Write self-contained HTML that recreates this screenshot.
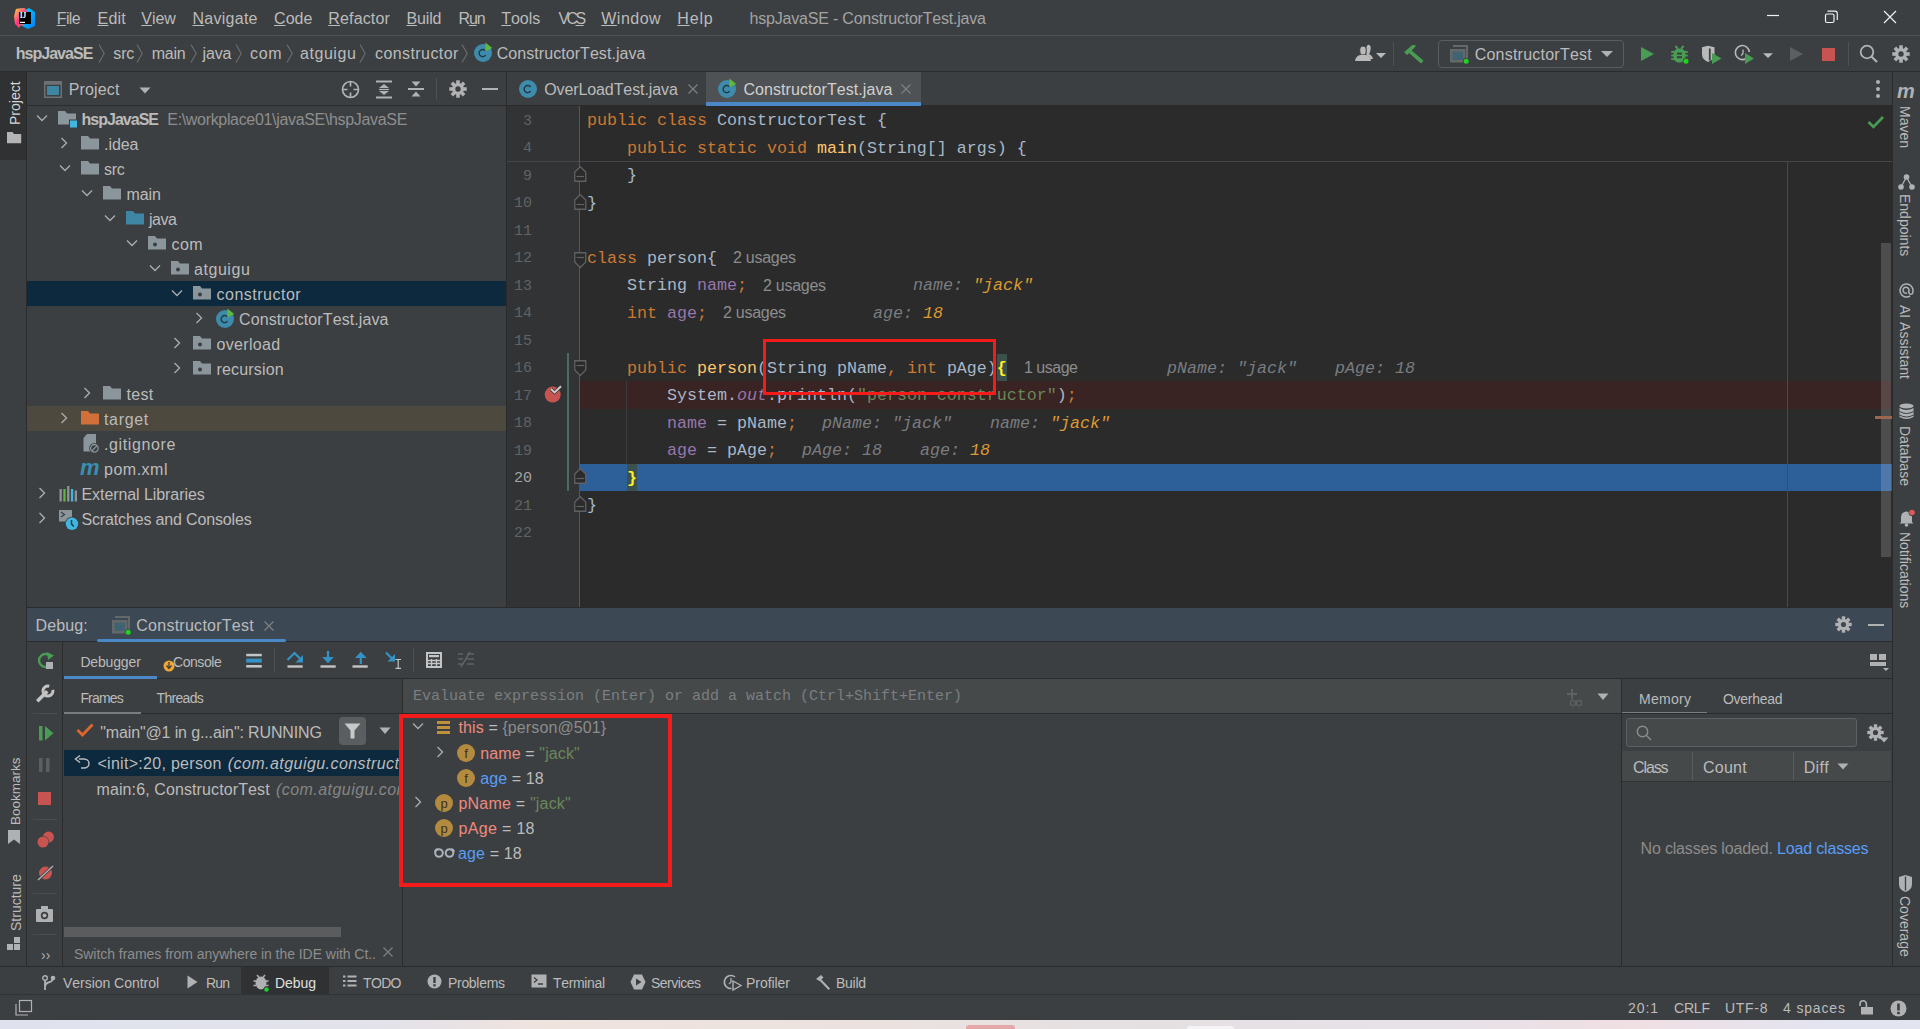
<!DOCTYPE html><html><head><meta charset="utf-8"><title>IDE</title><style>
html,body{margin:0;padding:0;}
body{width:1920px;height:1029px;overflow:hidden;position:relative;background:#3c3f41;}
.a{position:absolute;}
.t{white-space:pre;font-kerning:none;}
.s{font-family:"Liberation Sans",sans-serif;}
.m{font-family:"Liberation Mono",monospace;}
svg.a{overflow:visible;}
</style></head><body><div class="a" style="left:0px;top:0px;width:1920px;height:1029px;background:#3c3f41;"></div>
<div class="a" style="left:0px;top:1020px;width:1920px;height:9px;background:linear-gradient(90deg,#dfe2ee 0%,#e3e2ea 20%,#efe3de 28%,#ebe2df 45%,#e4e0e2 60%,#e6e2e8 75%,#f0dfe3 85%,#e3e4f0 95%,#e2e4f0 100%);"></div>
<div class="a" style="left:966px;top:1025px;width:49px;height:4px;background:#e6a9a9;border-radius:3px 3px 0 0;"></div>
<div class="a" style="left:1187px;top:1026px;width:47px;height:3px;background:#f4f4f6;border-radius:3px 3px 0 0;"></div>
<div class="a" style="left:0px;top:35px;width:1920px;height:1px;background:#505356;"></div>
<svg class="a" style="left:14px;top:7px;" width="22" height="22" viewBox="0 0 22 22">
<defs><linearGradient id="lg1" x1="0" y1="0" x2="1" y2="1"><stop offset="0" stop-color="#ffd23c"/><stop offset=".5" stop-color="#ff318c"/><stop offset="1" stop-color="#fc801d"/></linearGradient>
<linearGradient id="lg2" x1="0" y1="0" x2="1" y2="1"><stop offset="0" stop-color="#00e0ff"/><stop offset="1" stop-color="#087cfa"/></linearGradient></defs>
<polygon points="2,2 10,1 13,6 5,21 1,17 0,9" fill="url(#lg1)"/>
<polygon points="9,1 14,6 11,3 15,1 21,5 21,19 14,22 6,18" fill="url(#lg2)"/>
<polygon points="2,2 11,1 15,7 9,19 1,16 1,10" fill="url(#lg1)" opacity=".9"/>
<rect x="5" y="5" width="12" height="12" fill="#000"/>
<text x="5.8" y="11" font-family="Liberation Serif" font-weight="bold" font-size="7.5" fill="#fff" letter-spacing="-0.3">IJ</text>
<rect x="6" y="14.8" width="5" height="1.2" fill="#fff"/>
</svg>
<div class="a t s " style="left:56.7px;top:7.95px;font-size:16px;line-height:21px;color:#bbbbbb;letter-spacing:-0.594px;"><span style="text-decoration:underline;text-underline-offset:1px;text-decoration-thickness:1px">F</span>ile</div>
<div class="a t s " style="left:97.5px;top:7.95px;font-size:16px;line-height:21px;color:#bbbbbb;letter-spacing:0.243px;"><span style="text-decoration:underline;text-underline-offset:1px;text-decoration-thickness:1px">E</span>dit</div>
<div class="a t s " style="left:141.3px;top:7.95px;font-size:16px;line-height:21px;color:#bbbbbb;letter-spacing:-0.060px;"><span style="text-decoration:underline;text-underline-offset:1px;text-decoration-thickness:1px">V</span>iew</div>
<div class="a t s " style="left:192.5px;top:7.95px;font-size:16px;line-height:21px;color:#bbbbbb;letter-spacing:0.265px;"><span style="text-decoration:underline;text-underline-offset:1px;text-decoration-thickness:1px">N</span>avigate</div>
<div class="a t s " style="left:274px;top:7.95px;font-size:16px;line-height:21px;color:#bbbbbb;letter-spacing:0.083px;"><span style="text-decoration:underline;text-underline-offset:1px;text-decoration-thickness:1px">C</span>ode</div>
<div class="a t s " style="left:328.3px;top:7.95px;font-size:16px;line-height:21px;color:#bbbbbb;letter-spacing:0.147px;"><span style="text-decoration:underline;text-underline-offset:1px;text-decoration-thickness:1px">R</span>efactor</div>
<div class="a t s " style="left:406.5px;top:7.95px;font-size:16px;line-height:21px;color:#bbbbbb;letter-spacing:-0.145px;"><span style="text-decoration:underline;text-underline-offset:1px;text-decoration-thickness:1px">B</span>uild</div>
<div class="a t s " style="left:458.5px;top:7.95px;font-size:16px;line-height:21px;color:#bbbbbb;letter-spacing:-1.176px;">R<span style="text-decoration:underline;text-underline-offset:1px;text-decoration-thickness:1px">u</span>n</div>
<div class="a t s " style="left:501.25px;top:7.95px;font-size:16px;line-height:21px;color:#bbbbbb;letter-spacing:-0.031px;"><span style="text-decoration:underline;text-underline-offset:1px;text-decoration-thickness:1px">T</span>ools</div>
<div class="a t s " style="left:558.5px;top:7.95px;font-size:16px;line-height:21px;color:#bbbbbb;letter-spacing:-2.599px;">VC<span style="text-decoration:underline;text-underline-offset:1px;text-decoration-thickness:1px">S</span></div>
<div class="a t s " style="left:601.25px;top:7.95px;font-size:16px;line-height:21px;color:#bbbbbb;letter-spacing:0.499px;"><span style="text-decoration:underline;text-underline-offset:1px;text-decoration-thickness:1px">W</span>indow</div>
<div class="a t s " style="left:677.3px;top:7.95px;font-size:16px;line-height:21px;color:#bbbbbb;letter-spacing:0.831px;"><span style="text-decoration:underline;text-underline-offset:1px;text-decoration-thickness:1px">H</span>elp</div>
<div class="a t s " style="left:749.6px;top:7.95px;font-size:16px;line-height:21px;color:#a3a3a3;letter-spacing:-0.205px;">hspJavaSE - ConstructorTest.java</div>
<svg class="a" style="left:1760px;top:4px;" width="160" height="26" viewBox="0 0 160 26">
<line x1="7" y1="11.5" x2="19" y2="11.5" stroke="#f0f0f0" stroke-width="1.2"/>
<rect x="65.5" y="10" width="8.5" height="8.5" rx="1.5" fill="none" stroke="#f0f0f0" stroke-width="1.2"/>
<path d="M67.5 7.2 H75 Q77.3 7.2 77.3 9.5 V16" fill="none" stroke="#f0f0f0" stroke-width="1.2"/>
<path d="M124 7 L136 19 M136 7 L124 19" stroke="#f0f0f0" stroke-width="1.2"/>
</svg>
<div class="a" style="left:0px;top:71px;width:1920px;height:1px;background:#2b2b2b;"></div>
<div class="a t s " style="left:15.8px;top:43.45px;font-size:16px;line-height:21px;color:#bbbbbb;letter-spacing:-0.985px;font-weight:bold;">hspJavaSE</div>
<div class="a t s " style="left:113.3px;top:43.45px;font-size:16px;line-height:21px;color:#bbbbbb;letter-spacing:-0.164px;">src</div>
<div class="a t s " style="left:151.7px;top:43.45px;font-size:16px;line-height:21px;color:#bbbbbb;letter-spacing:-0.227px;">main</div>
<div class="a t s " style="left:202.5px;top:43.45px;font-size:16px;line-height:21px;color:#bbbbbb;letter-spacing:-0.117px;">java</div>
<div class="a t s " style="left:250px;top:43.45px;font-size:16px;line-height:21px;color:#bbbbbb;letter-spacing:0.737px;">com</div>
<div class="a t s " style="left:300px;top:43.45px;font-size:16px;line-height:21px;color:#bbbbbb;letter-spacing:0.551px;">atguigu</div>
<div class="a t s " style="left:375px;top:43.45px;font-size:16px;line-height:21px;color:#bbbbbb;letter-spacing:0.416px;">constructor</div>
<svg class="a" style="left:97.5px;top:44px;" width="8" height="19" viewBox="0 0 8 19"><path d="M1 0.5 L6.2 9.5 L1 18.5" fill="none" stroke="#6b6d6f" stroke-width="1.1"/></svg>
<svg class="a" style="left:136px;top:44px;" width="8" height="19" viewBox="0 0 8 19"><path d="M1 0.5 L6.2 9.5 L1 18.5" fill="none" stroke="#6b6d6f" stroke-width="1.1"/></svg>
<svg class="a" style="left:189.5px;top:44px;" width="8" height="19" viewBox="0 0 8 19"><path d="M1 0.5 L6.2 9.5 L1 18.5" fill="none" stroke="#6b6d6f" stroke-width="1.1"/></svg>
<svg class="a" style="left:235px;top:44px;" width="8" height="19" viewBox="0 0 8 19"><path d="M1 0.5 L6.2 9.5 L1 18.5" fill="none" stroke="#6b6d6f" stroke-width="1.1"/></svg>
<svg class="a" style="left:285.5px;top:44px;" width="8" height="19" viewBox="0 0 8 19"><path d="M1 0.5 L6.2 9.5 L1 18.5" fill="none" stroke="#6b6d6f" stroke-width="1.1"/></svg>
<svg class="a" style="left:359px;top:44px;" width="8" height="19" viewBox="0 0 8 19"><path d="M1 0.5 L6.2 9.5 L1 18.5" fill="none" stroke="#6b6d6f" stroke-width="1.1"/></svg>
<svg class="a" style="left:461px;top:44px;" width="8" height="19" viewBox="0 0 8 19"><path d="M1 0.5 L6.2 9.5 L1 18.5" fill="none" stroke="#6b6d6f" stroke-width="1.1"/></svg>
<svg class="a" style="left:474px;top:44px;" width="18" height="18" viewBox="0 0 18 18"><circle cx="9" cy="9" r="9" fill="#3e8bab"/><path d="M11.6 7 A3.6 3.6 0 1 0 11.6 11.2" fill="none" stroke="#1f3a46" stroke-width="1.4"/><polygon points="11.3,-1.5 18.3,4 11.3,7.6" fill="#5fb83f"/></svg>
<div class="a t s " style="left:496.7px;top:43.45px;font-size:16px;line-height:21px;color:#bbbbbb;letter-spacing:0.063px;">ConstructorTest.java</div>
<svg class="a" style="left:1352px;top:42px;" width="36" height="24" viewBox="0 0 36 24">
<path d="M14.5 5 Q15.5 2 17.5 3 Q19.5 4.5 18.3 9 Q18 11 17 12 Q20.5 13.5 21 17 L18.5 17 Q17 14 14.5 13.5 Z" fill="#b9b9b9"/>
<ellipse cx="11" cy="8.5" rx="3.2" ry="4.3" fill="#b9b9b9" stroke="#3c3f41" stroke-width="0.8"/>
<path d="M3 19 Q3.5 14 9 12.8 L13 12.8 Q18.5 14 19 19 Z" fill="#b9b9b9"/>
<polygon points="24,11 34,11 29,16" fill="#b9b9b9"/>
</svg>
<div class="a" style="left:1393px;top:42px;width:1px;height:24px;background:#515151;"></div>
<svg class="a" style="left:1402px;top:43px;" width="24" height="22" viewBox="0 0 24 22"><polygon points="2,9.3 10.3,2 14,2.3 12.6,4.6 5.2,12" fill="#499c54"/><polygon points="6.8,9.8 9.4,7.2 21.6,17.8 19,20.4" fill="#499c54"/></svg>
<div class="a" style="left:1438px;top:40px;width:186px;height:28px;border:1.5px solid #5a5d5f;border-radius:4px;box-sizing:border-box;"></div>
<svg class="a" style="left:1450px;top:45px;" width="20" height="20" viewBox="0 0 20 20"><rect x="3" y="0" width="15" height="2" fill="#65686a"/><rect x="16" y="0" width="2" height="14" fill="#65686a"/><rect x="0" y="4" width="15.5" height="13.5" fill="#65686a"/><rect x="2.6" y="6.6" width="10.3" height="8.3" fill="#3e6372"/><circle cx="16.2" cy="16.2" r="3.3" fill="#3c3f41"/><circle cx="16.2" cy="16.2" r="2.5" fill="#1fd41f"/></svg>
<div class="a t s " style="left:1474.7px;top:43.95px;font-size:16px;line-height:21px;color:#bbbbbb;letter-spacing:0.228px;">ConstructorTest</div>
<svg class="a" style="left:1600px;top:50px;" width="14" height="8" viewBox="0 0 14 8"><polygon points="1,1 13,1 7,7" fill="#afb1b3"/></svg>
<svg class="a" style="left:1640px;top:46px;" width="16" height="16" viewBox="0 0 16 16"><polygon points="1,1 14,8 1,15" fill="#499c54"/></svg>
<svg class="a" style="left:1670px;top:45px;" width="20" height="20" viewBox="0 0 20 20">
<path d="M5.5 0.8 L7.8 3.8 M13.5 0.8 L11.2 3.8" stroke="#499c54" stroke-width="2"/>
<rect x="3.5" y="3.5" width="12" height="14" rx="5.5" fill="#499c54"/>
<rect x="1.2" y="6" width="16.6" height="1.8" fill="#499c54"/><rect x="1.2" y="9.6" width="16.6" height="1.8" fill="#499c54"/><rect x="1.2" y="13.2" width="16.6" height="1.8" fill="#499c54"/>
<rect x="7" y="7.6" width="5" height="2" fill="#3c3f41"/><rect x="7" y="11.2" width="5" height="2" fill="#3c3f41"/>
<circle cx="16" cy="16.2" r="3.2" fill="#3c3f41"/><circle cx="16" cy="16.2" r="2.5" fill="#1fd41f"/>
</svg>
<svg class="a" style="left:1701px;top:45px;" width="22" height="20" viewBox="0 0 22 20">
<path d="M1 2.2 L7 0.8 L13.5 2.2 V9 Q13.5 14.5 7 17 Q1 14.5 1 9 Z" fill="#b9b9b9"/>
<path d="M8.8 3.5 V15.5" stroke="#3c3f41" stroke-width="1.8"/><path d="M10.5 5 V13" stroke="#b9b9b9" stroke-width="1" />
<polygon points="11,8 20.5,13.5 11,19" fill="#499c54"/>
</svg>
<svg class="a" style="left:1735px;top:45px;" width="40" height="20" viewBox="0 0 40 20">
<path d="M11 13.5 A7 7 0 1 1 14.3 7" fill="none" stroke="#b9b9b9" stroke-width="1.6"/>
<path d="M8 4.5 V8.5 L6.2 10.5" fill="none" stroke="#b9b9b9" stroke-width="1.3"/>
<polygon points="10,8 19,13.5 10,19" fill="#499c54"/>
<polygon points="28,8.2 38,8.2 33,13" fill="#b9b9b9"/>
</svg>
<svg class="a" style="left:1789px;top:46px;" width="16" height="16" viewBox="0 0 16 16"><polygon points="1,1 14,8 1,15" fill="#5c5e60"/></svg>
<div class="a" style="left:1822px;top:48px;width:13px;height:13px;background:#c75450;"></div>
<div class="a" style="left:1848px;top:42px;width:1px;height:24px;background:#515151;"></div>
<svg class="a" style="left:1859px;top:44px;" width="22" height="22" viewBox="0 0 22 22"><circle cx="8" cy="8" r="6.3" fill="none" stroke="#afb1b3" stroke-width="1.8"/><path d="M12.5 12.5 L18 18" stroke="#afb1b3" stroke-width="2.2"/></svg>
<svg class="a" style="left:1892px;top:45px;" width="18" height="18" viewBox="0 0 18 18"><rect x="7.20" y="0.3" width="3.60" height="5.40" fill="#afb1b3" transform="rotate(0 9.0 9.0)"/><rect x="7.20" y="0.3" width="3.60" height="5.40" fill="#afb1b3" transform="rotate(45 9.0 9.0)"/><rect x="7.20" y="0.3" width="3.60" height="5.40" fill="#afb1b3" transform="rotate(90 9.0 9.0)"/><rect x="7.20" y="0.3" width="3.60" height="5.40" fill="#afb1b3" transform="rotate(135 9.0 9.0)"/><rect x="7.20" y="0.3" width="3.60" height="5.40" fill="#afb1b3" transform="rotate(180 9.0 9.0)"/><rect x="7.20" y="0.3" width="3.60" height="5.40" fill="#afb1b3" transform="rotate(225 9.0 9.0)"/><rect x="7.20" y="0.3" width="3.60" height="5.40" fill="#afb1b3" transform="rotate(270 9.0 9.0)"/><rect x="7.20" y="0.3" width="3.60" height="5.40" fill="#afb1b3" transform="rotate(315 9.0 9.0)"/><circle cx="9.0" cy="9.0" r="5.94" fill="#afb1b3"/><circle cx="9.0" cy="9.0" r="2.70" fill="#3c3f41"/></svg>
<div class="a" style="left:0px;top:72px;width:26px;height:88px;background:#2f3133;"></div>
<div class="a" style="left:26px;top:72px;width:1px;height:894px;background:#2b2b2b;"></div>
<div class="a t s" style="left:7px;top:125px;font-size:14px;line-height:17px;color:#d6d6d6;transform-origin:0 0;transform:rotate(-90deg);">Project</div>
<svg class="a" style="left:7px;top:131px;" width="15" height="14" viewBox="0 0 15 14"><path d="M0 1 H5.5 L7 3 H14.2 V12.2 H0 Z" fill="#b4b4b4"/></svg>
<div class="a" style="left:27px;top:105px;width:480px;height:1px;background:#2b2b2b;"></div>
<svg class="a" style="left:44px;top:81px;" width="18" height="17" viewBox="0 0 18 17"><rect x="0.75" y="0.75" width="16.5" height="15.5" fill="none" stroke="#6e7173" stroke-width="1.5"/><rect x="0.75" y="0.75" width="16.5" height="3" fill="#6e7173"/><rect x="3" y="5" width="12" height="9" fill="#3f86a4"/></svg>
<div class="a t s " style="left:68.75px;top:78.95px;font-size:16px;line-height:21px;color:#bbbbbb;letter-spacing:0.151px;">Project</div>
<svg class="a" style="left:139px;top:87px;" width="12" height="7" viewBox="0 0 12 7"><polygon points="0.5,0.5 11.5,0.5 6,6.5" fill="#afb1b3"/></svg>
<svg class="a" style="left:341px;top:80px;" width="19" height="19" viewBox="0 0 19 19"><circle cx="9.5" cy="9.5" r="8" fill="none" stroke="#afb1b3" stroke-width="1.7"/><path d="M9.5 1.5 V6.5 M9.5 12.5 V17.5 M1.5 9.5 H6.5 M12.5 9.5 H17.5" stroke="#afb1b3" stroke-width="1.7"/></svg>
<svg class="a" style="left:375px;top:80px;" width="18" height="19" viewBox="0 0 18 19"><path d="M1 1.5 H17 M1 17.5 H17" stroke="#afb1b3" stroke-width="2"/><polygon points="9,4 14,8 4,8" fill="#afb1b3"/><polygon points="9,15 14,11 4,11" fill="#afb1b3"/><path d="M4 9.5 H14" stroke="#afb1b3" stroke-width="1.2"/></svg>
<svg class="a" style="left:407px;top:80px;" width="18" height="19" viewBox="0 0 18 19"><path d="M1 9 H17" stroke="#afb1b3" stroke-width="2"/><polygon points="9,6.5 13.5,1.5 4.5,1.5" fill="#afb1b3"/><polygon points="9,11.5 13.5,16.5 4.5,16.5" fill="#afb1b3"/></svg>
<div class="a" style="left:436px;top:78px;width:1px;height:22px;background:#515151;"></div>
<svg class="a" style="left:449px;top:80px;" width="18" height="18" viewBox="0 0 18 18"><rect x="7.20" y="0.3" width="3.60" height="5.40" fill="#afb1b3" transform="rotate(0 9.0 9.0)"/><rect x="7.20" y="0.3" width="3.60" height="5.40" fill="#afb1b3" transform="rotate(45 9.0 9.0)"/><rect x="7.20" y="0.3" width="3.60" height="5.40" fill="#afb1b3" transform="rotate(90 9.0 9.0)"/><rect x="7.20" y="0.3" width="3.60" height="5.40" fill="#afb1b3" transform="rotate(135 9.0 9.0)"/><rect x="7.20" y="0.3" width="3.60" height="5.40" fill="#afb1b3" transform="rotate(180 9.0 9.0)"/><rect x="7.20" y="0.3" width="3.60" height="5.40" fill="#afb1b3" transform="rotate(225 9.0 9.0)"/><rect x="7.20" y="0.3" width="3.60" height="5.40" fill="#afb1b3" transform="rotate(270 9.0 9.0)"/><rect x="7.20" y="0.3" width="3.60" height="5.40" fill="#afb1b3" transform="rotate(315 9.0 9.0)"/><circle cx="9.0" cy="9.0" r="5.94" fill="#afb1b3"/><circle cx="9.0" cy="9.0" r="2.70" fill="#3c3f41"/></svg>
<div class="a" style="left:482px;top:88px;width:16px;height:2px;background:#afb1b3;"></div>
<div class="a" style="left:506px;top:72px;width:1px;height:536px;background:#2b2b2b;"></div>
<div class="a" style="left:27px;top:281px;width:479px;height:25px;background:#0d293e;"></div>
<div class="a" style="left:27px;top:406px;width:479px;height:25px;background:#4d493e;"></div>
<svg class="a" style="left:36.0px;top:113.5px;" width="12" height="8" viewBox="0 0 12 8"><path d="M1 1.5 L6 6.5 L11 1.5" fill="none" stroke="#a9abad" stroke-width="1.4"/></svg>
<svg class="a" style="left:58.0px;top:111.0px;" width="19" height="17" viewBox="0 0 19 17"><path d="M0 0 H7 L9 2.5 H18 V13.5 H0 Z" fill="#8a959c"/><rect x="11" y="8.5" width="8" height="7.5" fill="#3c3f41"/><rect x="12" y="9.5" width="7" height="7" fill="#40b6e0"/></svg>
<div class="a t s " style="left:81.5px;top:108.95px;font-size:16px;line-height:21px;color:#bbbbbb;letter-spacing:-0.985px;font-weight:bold;">hspJavaSE</div>
<div class="a t s " style="left:167.3px;top:108.95px;font-size:16px;line-height:21px;color:#8e8e8e;letter-spacing:-0.330px;">E:\workplace01\javaSE\hspJavaSE</div>
<svg class="a" style="left:60.0px;top:136.5px;" width="8" height="12" viewBox="0 0 8 12"><path d="M1.5 1 L6.5 6 L1.5 11" fill="none" stroke="#a9abad" stroke-width="1.4"/></svg>
<svg class="a" style="left:80.5px;top:136.0px;" width="19" height="17" viewBox="0 0 19 17"><path d="M0 0 H7 L9 2.5 H18 V13.5 H0 Z" fill="#8a959c"/></svg>
<div class="a t s " style="left:104.0px;top:133.95px;font-size:16px;line-height:21px;color:#bbbbbb;letter-spacing:-0.049px;">.idea</div>
<svg class="a" style="left:58.5px;top:163.5px;" width="12" height="8" viewBox="0 0 12 8"><path d="M1 1.5 L6 6.5 L11 1.5" fill="none" stroke="#a9abad" stroke-width="1.4"/></svg>
<svg class="a" style="left:80.5px;top:161.0px;" width="19" height="17" viewBox="0 0 19 17"><path d="M0 0 H7 L9 2.5 H18 V13.5 H0 Z" fill="#8a959c"/></svg>
<div class="a t s " style="left:104.0px;top:158.95px;font-size:16px;line-height:21px;color:#bbbbbb;letter-spacing:-0.314px;">src</div>
<svg class="a" style="left:81.0px;top:188.5px;" width="12" height="8" viewBox="0 0 12 8"><path d="M1 1.5 L6 6.5 L11 1.5" fill="none" stroke="#a9abad" stroke-width="1.4"/></svg>
<svg class="a" style="left:103.0px;top:186.0px;" width="19" height="17" viewBox="0 0 19 17"><path d="M0 0 H7 L9 2.5 H18 V13.5 H0 Z" fill="#8a959c"/></svg>
<div class="a t s " style="left:126.5px;top:183.95px;font-size:16px;line-height:21px;color:#bbbbbb;letter-spacing:-0.127px;">main</div>
<svg class="a" style="left:103.5px;top:213.5px;" width="12" height="8" viewBox="0 0 12 8"><path d="M1 1.5 L6 6.5 L11 1.5" fill="none" stroke="#a9abad" stroke-width="1.4"/></svg>
<svg class="a" style="left:125.5px;top:211.0px;" width="19" height="17" viewBox="0 0 19 17"><path d="M0 0 H7 L9 2.5 H18 V13.5 H0 Z" fill="#3f86a4"/></svg>
<div class="a t s " style="left:149.0px;top:208.95px;font-size:16px;line-height:21px;color:#bbbbbb;letter-spacing:-0.451px;">java</div>
<svg class="a" style="left:126.0px;top:238.5px;" width="12" height="8" viewBox="0 0 12 8"><path d="M1 1.5 L6 6.5 L11 1.5" fill="none" stroke="#a9abad" stroke-width="1.4"/></svg>
<svg class="a" style="left:148.0px;top:236.0px;" width="19" height="17" viewBox="0 0 19 17"><path d="M0 0 H7 L9 2.5 H18 V13.5 H0 Z" fill="#8a959c"/><circle cx="7" cy="8.5" r="2" fill="#3c3f41"/></svg>
<div class="a t s " style="left:171.5px;top:233.95px;font-size:16px;line-height:21px;color:#bbbbbb;letter-spacing:0.387px;">com</div>
<svg class="a" style="left:148.5px;top:263.5px;" width="12" height="8" viewBox="0 0 12 8"><path d="M1 1.5 L6 6.5 L11 1.5" fill="none" stroke="#a9abad" stroke-width="1.4"/></svg>
<svg class="a" style="left:170.5px;top:261.0px;" width="19" height="17" viewBox="0 0 19 17"><path d="M0 0 H7 L9 2.5 H18 V13.5 H0 Z" fill="#8a959c"/><circle cx="7" cy="8.5" r="2" fill="#3c3f41"/></svg>
<div class="a t s " style="left:194.0px;top:258.95px;font-size:16px;line-height:21px;color:#bbbbbb;letter-spacing:0.551px;">atguigu</div>
<svg class="a" style="left:171.0px;top:288.5px;" width="12" height="8" viewBox="0 0 12 8"><path d="M1 1.5 L6 6.5 L11 1.5" fill="none" stroke="#a9abad" stroke-width="1.4"/></svg>
<svg class="a" style="left:193.0px;top:286.0px;" width="19" height="17" viewBox="0 0 19 17"><path d="M0 0 H7 L9 2.5 H18 V13.5 H0 Z" fill="#8a959c"/><circle cx="7" cy="8.5" r="2" fill="#3c3f41"/></svg>
<div class="a t s " style="left:216.5px;top:283.95px;font-size:16px;line-height:21px;color:#bbbbbb;letter-spacing:0.506px;">constructor</div>
<svg class="a" style="left:195.0px;top:311.5px;" width="8" height="12" viewBox="0 0 8 12"><path d="M1.5 1 L6.5 6 L1.5 11" fill="none" stroke="#a9abad" stroke-width="1.4"/></svg>
<svg class="a" style="left:215.5px;top:309.5px;" width="18" height="18" viewBox="0 0 18 18"><circle cx="9" cy="9" r="9" fill="#3e8bab"/><path d="M11.6 7 A3.6 3.6 0 1 0 11.6 11.2" fill="none" stroke="#1f3a46" stroke-width="1.4"/><polygon points="11.3,-1.5 18.3,4 11.3,7.6" fill="#5fb83f"/></svg>
<div class="a t s " style="left:239.0px;top:308.95px;font-size:16px;line-height:21px;color:#bbbbbb;letter-spacing:0.100px;">ConstructorTest.java</div>
<svg class="a" style="left:172.5px;top:336.5px;" width="8" height="12" viewBox="0 0 8 12"><path d="M1.5 1 L6.5 6 L1.5 11" fill="none" stroke="#a9abad" stroke-width="1.4"/></svg>
<svg class="a" style="left:193.0px;top:336.0px;" width="19" height="17" viewBox="0 0 19 17"><path d="M0 0 H7 L9 2.5 H18 V13.5 H0 Z" fill="#8a959c"/><circle cx="7" cy="8.5" r="2" fill="#3c3f41"/></svg>
<div class="a t s " style="left:216.5px;top:333.95px;font-size:16px;line-height:21px;color:#bbbbbb;letter-spacing:0.332px;">overload</div>
<svg class="a" style="left:172.5px;top:361.5px;" width="8" height="12" viewBox="0 0 8 12"><path d="M1.5 1 L6.5 6 L1.5 11" fill="none" stroke="#a9abad" stroke-width="1.4"/></svg>
<svg class="a" style="left:193.0px;top:361.0px;" width="19" height="17" viewBox="0 0 19 17"><path d="M0 0 H7 L9 2.5 H18 V13.5 H0 Z" fill="#8a959c"/><circle cx="7" cy="8.5" r="2" fill="#3c3f41"/></svg>
<div class="a t s " style="left:216.5px;top:358.95px;font-size:16px;line-height:21px;color:#bbbbbb;letter-spacing:0.174px;">recursion</div>
<svg class="a" style="left:82.5px;top:386.5px;" width="8" height="12" viewBox="0 0 8 12"><path d="M1.5 1 L6.5 6 L1.5 11" fill="none" stroke="#a9abad" stroke-width="1.4"/></svg>
<svg class="a" style="left:103.0px;top:386.0px;" width="19" height="17" viewBox="0 0 19 17"><path d="M0 0 H7 L9 2.5 H18 V13.5 H0 Z" fill="#8a959c"/></svg>
<div class="a t s " style="left:126.5px;top:383.95px;font-size:16px;line-height:21px;color:#bbbbbb;letter-spacing:0.337px;">test</div>
<svg class="a" style="left:60.0px;top:411.5px;" width="8" height="12" viewBox="0 0 8 12"><path d="M1.5 1 L6.5 6 L1.5 11" fill="none" stroke="#a9abad" stroke-width="1.4"/></svg>
<svg class="a" style="left:80.5px;top:411.0px;" width="19" height="17" viewBox="0 0 19 17"><path d="M0 0 H7 L9 2.5 H18 V13.5 H0 Z" fill="#d2703a"/></svg>
<div class="a t s " style="left:104.0px;top:408.95px;font-size:16px;line-height:21px;color:#bbbbbb;letter-spacing:0.677px;">target</div>
<svg class="a" style="left:83px;top:434.0px;" width="20" height="20" viewBox="0 0 20 20"><path d="M4 0 H13 V17.5 H0.5 V4 Z" fill="#8a959c"/><circle cx="11.4" cy="14.3" r="5.2" fill="#3c3f41"/><circle cx="11.4" cy="14.3" r="3.8" fill="none" stroke="#8a959c" stroke-width="1.3"/><path d="M9 16.7 L13.8 11.9" stroke="#8a959c" stroke-width="1.3"/></svg>
<div class="a t s " style="left:104.0px;top:433.95px;font-size:16px;line-height:21px;color:#bbbbbb;letter-spacing:0.620px;">.gitignore</div>
<div class="a t s " style="left:80.0px;top:452.87px;font-size:22px;line-height:29px;color:#3a8fb0;font-style:italic;font-weight:bold;letter-spacing:-1px;">m</div>
<div class="a t s " style="left:104.0px;top:458.95px;font-size:16px;line-height:21px;color:#bbbbbb;letter-spacing:0.508px;">pom.xml</div>
<svg class="a" style="left:37.5px;top:486.5px;" width="8" height="12" viewBox="0 0 8 12"><path d="M1.5 1 L6.5 6 L1.5 11" fill="none" stroke="#a9abad" stroke-width="1.4"/></svg>
<svg class="a" style="left:59px;top:484.5px;" width="20" height="18" viewBox="0 0 20 18"><rect x="0.5" y="4" width="2.3" height="12.5" fill="#8a959c"/><rect x="4.3" y="4" width="2.3" height="12.5" fill="#62b543"/><rect x="8.1" y="1" width="2.3" height="15.5" fill="#8a959c"/><rect x="11.9" y="4" width="2.3" height="12.5" fill="#40b6e0"/><rect x="15.7" y="5.5" width="2.3" height="11" fill="#8a959c"/></svg>
<div class="a t s " style="left:81.5px;top:483.95px;font-size:16px;line-height:21px;color:#bbbbbb;letter-spacing:-0.076px;">External Libraries</div>
<svg class="a" style="left:37.5px;top:511.5px;" width="8" height="12" viewBox="0 0 8 12"><path d="M1.5 1 L6.5 6 L1.5 11" fill="none" stroke="#a9abad" stroke-width="1.4"/></svg>
<svg class="a" style="left:59px;top:510.0px;" width="22" height="22" viewBox="0 0 22 22"><rect x="0" y="0" width="13" height="11.5" fill="#8a959c"/><path d="M2 2 L5.5 4.5 L2 7" fill="none" stroke="#3c3f41" stroke-width="1.2"/><circle cx="13" cy="13.8" r="7" fill="#3c3f41"/><circle cx="13" cy="13.8" r="6.2" fill="#40b6e0"/><path d="M12.5 10 V14 L14.8 16.5" fill="none" stroke="#1c3a48" stroke-width="1.5"/></svg>
<div class="a t s " style="left:81.5px;top:508.95px;font-size:16px;line-height:21px;color:#bbbbbb;letter-spacing:-0.154px;">Scratches and Consoles</div>
<div class="a" style="left:507px;top:105px;width:1385px;height:1px;background:#2b2b2b;"></div>
<svg class="a" style="left:519px;top:80px;" width="18" height="18" viewBox="0 0 18 18"><circle cx="9" cy="9" r="9" fill="#3e8bab"/><path d="M11.6 7 A3.6 3.6 0 1 0 11.6 11.2" fill="none" stroke="#1f3a46" stroke-width="1.4"/></svg>
<div class="a t s " style="left:544.2px;top:79.35px;font-size:16px;line-height:21px;color:#bbbbbb;letter-spacing:-0.099px;">OverLoadTest.java</div>
<svg class="a" style="left:688px;top:84px;" width="10" height="10" viewBox="0 0 10 10"><path d="M0.5 0.5 L9.5 9.5 M9.5 0.5 L0.5 9.5" stroke="#7d7f81" stroke-width="1.2"/></svg>
<div class="a" style="left:706px;top:72px;width:215px;height:34px;background:#4e5254;"></div>
<div class="a" style="left:706px;top:102px;width:215px;height:4px;background:#4a88c7;"></div>
<svg class="a" style="left:718px;top:80px;" width="18" height="18" viewBox="0 0 18 18"><circle cx="9" cy="9" r="9" fill="#3e8bab"/><path d="M11.6 7 A3.6 3.6 0 1 0 11.6 11.2" fill="none" stroke="#1f3a46" stroke-width="1.4"/><polygon points="11.3,-1.5 18.3,4 11.3,7.6" fill="#5fb83f"/></svg>
<div class="a t s " style="left:743.4px;top:79.35px;font-size:16px;line-height:21px;color:#d0d0d0;letter-spacing:0.073px;">ConstructorTest.java</div>
<svg class="a" style="left:901px;top:84px;" width="10" height="10" viewBox="0 0 10 10"><path d="M0.5 0.5 L9.5 9.5 M9.5 0.5 L0.5 9.5" stroke="#7d7f81" stroke-width="1.2"/></svg>
<div class="a" style="left:1876px;top:80px;width:4px;height:4px;background:#afb1b3;border-radius:2px;"></div>
<div class="a" style="left:1876px;top:87px;width:4px;height:4px;background:#afb1b3;border-radius:2px;"></div>
<div class="a" style="left:1876px;top:94px;width:4px;height:4px;background:#afb1b3;border-radius:2px;"></div>
<div class="a" style="left:507px;top:106px;width:1385px;height:501px;background:#2b2b2b;"></div>
<div class="a" style="left:507px;top:106px;width:72px;height:501px;background:#313335;"></div>
<div class="a" style="left:580px;top:381px;width:1312px;height:28px;background:#3a2323;"></div>
<div class="a" style="left:580px;top:464px;width:1312px;height:27px;background:#2d5f99;"></div>
<div class="a" style="left:627px;top:464px;width:10px;height:27px;background:#3b514d;"></div>
<div class="a" style="left:997px;top:354px;width:10px;height:27px;background:#3b514d;"></div>
<div class="a" style="left:507px;top:161px;width:1385px;height:1px;background:#45474a;"></div>
<div class="a" style="left:579px;top:106px;width:1px;height:501px;background:#545658;"></div>
<div class="a" style="left:1787px;top:162px;width:1px;height:445px;background:#4a4a4a;"></div>
<div class="a" style="left:626px;top:381px;width:1px;height:83px;background:#393b3d;"></div>
<div class="a" style="left:567px;top:353px;width:2px;height:138px;background:#4b6a62;"></div>
<div class="a t m " style="left:523.0px;top:111.61px;font-size:15px;line-height:20px;color:#606366;">3</div>
<div class="a t m " style="left:523.0px;top:139.11px;font-size:15px;line-height:20px;color:#606366;">4</div>
<div class="a t m " style="left:523.0px;top:166.61px;font-size:15px;line-height:20px;color:#606366;">9</div>
<div class="a t m " style="left:514.0px;top:194.11px;font-size:15px;line-height:20px;color:#606366;">10</div>
<div class="a t m " style="left:514.0px;top:221.61px;font-size:15px;line-height:20px;color:#606366;">11</div>
<div class="a t m " style="left:514.0px;top:249.11px;font-size:15px;line-height:20px;color:#606366;">12</div>
<div class="a t m " style="left:514.0px;top:276.61px;font-size:15px;line-height:20px;color:#606366;">13</div>
<div class="a t m " style="left:514.0px;top:304.11px;font-size:15px;line-height:20px;color:#606366;">14</div>
<div class="a t m " style="left:514.0px;top:331.61px;font-size:15px;line-height:20px;color:#606366;">15</div>
<div class="a t m " style="left:514.0px;top:359.11px;font-size:15px;line-height:20px;color:#606366;">16</div>
<div class="a t m " style="left:514.0px;top:386.61px;font-size:15px;line-height:20px;color:#606366;">17</div>
<div class="a t m " style="left:514.0px;top:414.11px;font-size:15px;line-height:20px;color:#606366;">18</div>
<div class="a t m " style="left:514.0px;top:441.61px;font-size:15px;line-height:20px;color:#606366;">19</div>
<div class="a t m " style="left:514.0px;top:469.11px;font-size:15px;line-height:20px;color:#a4a3a3;">20</div>
<div class="a t m " style="left:514.0px;top:496.61px;font-size:15px;line-height:20px;color:#606366;">21</div>
<div class="a t m " style="left:514.0px;top:524.11px;font-size:15px;line-height:20px;color:#606366;">22</div>
<svg class="a" style="left:543px;top:384px;" width="20" height="20" viewBox="0 0 20 20"><circle cx="9.7" cy="10.6" r="8" fill="#c75450"/><path d="M8 5 L11.6 8.5 L18 2.3" fill="none" stroke="#313335" stroke-width="3.4"/><path d="M8 5 L11.6 8.5 L18 2.3" fill="none" stroke="#cfcfcf" stroke-width="1.9"/></svg>
<svg class="a" style="left:573.5px;top:165.5px;" width="13" height="17" viewBox="0 0 13 17"><path d="M0.75 15.25 H11.75 V6 L6.25 0.75 L0.75 6 Z" fill="#2b2b2b" stroke="#5f6163" stroke-width="1.3"/><path d="M2.5 10.5 H10" stroke="#5f6163" stroke-width="1.2"/></svg>
<svg class="a" style="left:573.5px;top:193.5px;" width="13" height="17" viewBox="0 0 13 17"><path d="M0.75 15.25 H11.75 V6 L6.25 0.75 L0.75 6 Z" fill="#2b2b2b" stroke="#5f6163" stroke-width="1.3"/><path d="M2.5 10.5 H10" stroke="#5f6163" stroke-width="1.2"/></svg>
<svg class="a" style="left:573.5px;top:252px;" width="13" height="17" viewBox="0 0 13 17"><path d="M0.75 0.75 H11.75 V10 L6.25 15.5 L0.75 10 Z" fill="#2b2b2b" stroke="#5f6163" stroke-width="1.3"/><path d="M2.5 5.5 H10" stroke="#5f6163" stroke-width="1.2"/></svg>
<svg class="a" style="left:573.5px;top:360px;" width="13" height="17" viewBox="0 0 13 17"><path d="M0.75 0.75 H11.75 V10 L6.25 15.5 L0.75 10 Z" fill="#2b2b2b" stroke="#5f6163" stroke-width="1.3"/><path d="M2.5 5.5 H10" stroke="#5f6163" stroke-width="1.2"/></svg>
<svg class="a" style="left:573.5px;top:468px;" width="13" height="17" viewBox="0 0 13 17"><path d="M0.75 15.25 H11.75 V6 L6.25 0.75 L0.75 6 Z" fill="#2b2b2b" stroke="#5f6163" stroke-width="1.3"/><path d="M2.5 10.5 H10" stroke="#5f6163" stroke-width="1.2"/></svg>
<svg class="a" style="left:573.5px;top:495.5px;" width="13" height="17" viewBox="0 0 13 17"><path d="M0.75 15.25 H11.75 V6 L6.25 0.75 L0.75 6 Z" fill="#2b2b2b" stroke="#5f6163" stroke-width="1.3"/><path d="M2.5 10.5 H10" stroke="#5f6163" stroke-width="1.2"/></svg>
<div class="a t m " style="left:587px;top:110.16px;font-size:16.667px;line-height:22px;color:#a9b7c6;"><span style="color:#cc7832">public </span><span style="color:#cc7832">class </span><span style="color:#a9b7c6">ConstructorTest {</span></div>
<div class="a t m " style="left:587px;top:137.66px;font-size:16.667px;line-height:22px;color:#a9b7c6;"><span style="color:#a9b7c6">    </span><span style="color:#cc7832">public </span><span style="color:#cc7832">static </span><span style="color:#cc7832">void </span><span style="color:#ffc66d">main</span><span style="color:#a9b7c6">(String[] args) {</span></div>
<div class="a t m " style="left:587px;top:165.16px;font-size:16.667px;line-height:22px;color:#a9b7c6;"><span style="color:#a9b7c6">    }</span></div>
<div class="a t m " style="left:587px;top:192.66px;font-size:16.667px;line-height:22px;color:#a9b7c6;"><span style="color:#a9b7c6">}</span></div>
<div class="a t m " style="left:587px;top:247.66px;font-size:16.667px;line-height:22px;color:#a9b7c6;"><span style="color:#cc7832">class </span><span style="color:#a9b7c6">person{</span></div>
<div class="a t m " style="left:587px;top:275.16px;font-size:16.667px;line-height:22px;color:#a9b7c6;"><span style="color:#a9b7c6">    String </span><span style="color:#9876aa">name</span><span style="color:#cc7832">;</span></div>
<div class="a t m " style="left:587px;top:302.66px;font-size:16.667px;line-height:22px;color:#a9b7c6;"><span style="color:#a9b7c6">    </span><span style="color:#cc7832">int </span><span style="color:#9876aa">age</span><span style="color:#cc7832">;</span></div>
<div class="a t m " style="left:587px;top:357.66px;font-size:16.667px;line-height:22px;color:#a9b7c6;"><span style="color:#a9b7c6">    </span><span style="color:#cc7832">public </span><span style="color:#ffc66d">person</span><span style="color:#a9b7c6">(String pName</span><span style="color:#cc7832">, </span><span style="color:#cc7832">int </span><span style="color:#a9b7c6">pAge)</span><span style="color:#ffef28;font-weight:bold">{</span></div>
<div class="a t m " style="left:587px;top:385.16px;font-size:16.667px;line-height:22px;color:#a9b7c6;"><span style="color:#a9b7c6">        System.</span><span style="color:#9876aa;font-style:italic">out</span><span style="color:#a9b7c6">.println(</span><span style="color:#6a8759">"person constructor"</span><span style="color:#a9b7c6">)</span><span style="color:#cc7832">;</span></div>
<div class="a t m " style="left:587px;top:412.66px;font-size:16.667px;line-height:22px;color:#a9b7c6;"><span style="color:#a9b7c6">        </span><span style="color:#9876aa">name</span><span style="color:#a9b7c6"> = pName</span><span style="color:#cc7832">;</span></div>
<div class="a t m " style="left:587px;top:440.16px;font-size:16.667px;line-height:22px;color:#a9b7c6;"><span style="color:#a9b7c6">        </span><span style="color:#9876aa">age</span><span style="color:#a9b7c6"> = pAge</span><span style="color:#cc7832">;</span></div>
<div class="a t m " style="left:587px;top:467.66px;font-size:16.667px;line-height:22px;color:#a9b7c6;"><span style="color:#a9b7c6">    </span><span style="color:#ffef28;font-weight:bold">}</span></div>
<div class="a t m " style="left:587px;top:495.16px;font-size:16.667px;line-height:22px;color:#a9b7c6;"><span style="color:#a9b7c6">}</span></div>
<div class="a t s " style="left:733px;top:247.05px;font-size:16px;line-height:21px;color:#8d8d8d;letter-spacing:-0.277px;">2 usages</div>
<div class="a t s " style="left:763px;top:274.55px;font-size:16px;line-height:21px;color:#8d8d8d;letter-spacing:-0.277px;">2 usages</div>
<div class="a t s " style="left:723px;top:302.05px;font-size:16px;line-height:21px;color:#8d8d8d;letter-spacing:-0.277px;">2 usages</div>
<div class="a t s " style="left:1024px;top:357.05px;font-size:16px;line-height:21px;color:#8d8d8d;letter-spacing:-0.490px;">1 usage</div>
<div class="a t m " style="left:913px;top:275.16px;font-size:16.667px;line-height:22px;color:#7a7c80;font-style:italic;"><span style="color:#7a7c80">name: </span><span style="color:#dc9a32">"jack"</span></div>
<div class="a t m " style="left:873px;top:302.66px;font-size:16.667px;line-height:22px;color:#7a7c80;font-style:italic;"><span style="color:#7a7c80">age: </span><span style="color:#dc9a32">18</span></div>
<div class="a t m " style="left:1167px;top:357.66px;font-size:16.667px;line-height:22px;color:#7a7c80;font-style:italic;"><span style="color:#7a7c80">pName: </span><span style="color:#7a7c80">"jack"</span></div>
<div class="a t m " style="left:1335px;top:357.66px;font-size:16.667px;line-height:22px;color:#7a7c80;font-style:italic;"><span style="color:#7a7c80">pAge: </span><span style="color:#7a7c80">18</span></div>
<div class="a t m " style="left:822px;top:412.66px;font-size:16.667px;line-height:22px;color:#7a7c80;font-style:italic;"><span style="color:#7a7c80">pName: </span><span style="color:#7a7c80">"jack"</span></div>
<div class="a t m " style="left:990px;top:412.66px;font-size:16.667px;line-height:22px;color:#7a7c80;font-style:italic;"><span style="color:#7a7c80">name: </span><span style="color:#dc9a32">"jack"</span></div>
<div class="a t m " style="left:802px;top:440.16px;font-size:16.667px;line-height:22px;color:#7a7c80;font-style:italic;"><span style="color:#7a7c80">pAge: </span><span style="color:#7a7c80">18</span></div>
<div class="a t m " style="left:920px;top:440.16px;font-size:16.667px;line-height:22px;color:#7a7c80;font-style:italic;"><span style="color:#7a7c80">age: </span><span style="color:#dc9a32">18</span></div>
<svg class="a" style="left:1867px;top:114px;" width="18" height="16" viewBox="0 0 18 16"><path d="M1.5 8 L6.5 13 L16 3" fill="none" stroke="#499c54" stroke-width="2.6"/></svg>
<div class="a" style="left:1881px;top:243px;width:10px;height:314px;background:rgba(255,255,255,0.16);"></div>
<div class="a" style="left:1875px;top:416px;width:17px;height:3px;background:#9a6850;"></div>
<div class="a" style="left:763px;top:339px;width:233px;height:56px;border:3.5px solid #f41b1b;box-sizing:border-box;"></div>
<div class="a" style="left:27px;top:607px;width:1865px;height:1px;background:#2b2b2b;"></div>
<div class="a" style="left:27px;top:608px;width:1865px;height:33px;background:#3d4855;"></div>
<div class="a" style="left:27px;top:641px;width:1865px;height:1px;background:#2b2b2b;"></div>
<div class="a t s " style="left:35.6px;top:615.45px;font-size:16px;line-height:21px;color:#bbbbbb;letter-spacing:0.081px;">Debug:</div>
<svg class="a" style="left:112px;top:616px;" width="20" height="20" viewBox="0 0 20 20"><rect x="3" y="0" width="15" height="2" fill="#65686a"/><rect x="16" y="0" width="2" height="14" fill="#65686a"/><rect x="0" y="4" width="15.5" height="13.5" fill="#65686a"/><rect x="2.6" y="6.6" width="10.3" height="8.3" fill="#3e6372"/><circle cx="16.2" cy="16.2" r="3.3" fill="#3d4855"/><circle cx="16.2" cy="16.2" r="2.5" fill="#1fd41f"/></svg>
<div class="a t s " style="left:136.25px;top:615.45px;font-size:16px;line-height:21px;color:#bbbbbb;letter-spacing:0.263px;">ConstructorTest</div>
<svg class="a" style="left:263.5px;top:621px;" width="10" height="10" viewBox="0 0 10 10"><path d="M0.5 0.5 L9.5 9.5 M9.5 0.5 L0.5 9.5" stroke="#7d7f81" stroke-width="1.2"/></svg>
<div class="a" style="left:97px;top:639px;width:189px;height:3px;background:#4a88c7;border-radius:1.5px;"></div>
<svg class="a" style="left:1835px;top:616px;" width="17" height="17" viewBox="0 0 17 17"><rect x="6.80" y="0.3" width="3.40" height="5.10" fill="#afb1b3" transform="rotate(0 8.5 8.5)"/><rect x="6.80" y="0.3" width="3.40" height="5.10" fill="#afb1b3" transform="rotate(45 8.5 8.5)"/><rect x="6.80" y="0.3" width="3.40" height="5.10" fill="#afb1b3" transform="rotate(90 8.5 8.5)"/><rect x="6.80" y="0.3" width="3.40" height="5.10" fill="#afb1b3" transform="rotate(135 8.5 8.5)"/><rect x="6.80" y="0.3" width="3.40" height="5.10" fill="#afb1b3" transform="rotate(180 8.5 8.5)"/><rect x="6.80" y="0.3" width="3.40" height="5.10" fill="#afb1b3" transform="rotate(225 8.5 8.5)"/><rect x="6.80" y="0.3" width="3.40" height="5.10" fill="#afb1b3" transform="rotate(270 8.5 8.5)"/><rect x="6.80" y="0.3" width="3.40" height="5.10" fill="#afb1b3" transform="rotate(315 8.5 8.5)"/><circle cx="8.5" cy="8.5" r="5.61" fill="#afb1b3"/><circle cx="8.5" cy="8.5" r="2.55" fill="#3d4855"/></svg>
<div class="a" style="left:1868px;top:624px;width:16px;height:2px;background:#afb1b3;"></div>
<div class="a" style="left:63px;top:678px;width:1829px;height:1px;background:#2b2b2b;"></div>
<div class="a" style="left:62px;top:642px;width:1px;height:324px;background:#2b2b2b;"></div>
<svg class="a" style="left:36px;top:651px;" width="20" height="20" viewBox="0 0 20 20"><path d="M15 6 A6.5 6.5 0 1 0 15.5 12" fill="none" stroke="#499c54" stroke-width="2.4"/><polygon points="11,1 18,4.5 12,9" fill="#499c54"/><rect x="10" y="11" width="7" height="7" fill="#afb1b3"/></svg>
<svg class="a" style="left:36px;top:684px;" width="19" height="19" viewBox="0 0 19 19"><path d="M2.5 16 L10 8.5" stroke="#c4c4c4" stroke-width="3.6" stroke-linecap="square"/><path d="M13.2 2.2 A5 5 0 1 0 16.8 5.8" fill="none" stroke="#c4c4c4" stroke-width="3"/></svg>
<div class="a" style="left:33px;top:713px;width:24px;height:1px;background:#4a4c4e;"></div>
<svg class="a" style="left:38px;top:725px;" width="18" height="17" viewBox="0 0 18 17"><rect x="1" y="1" width="3.5" height="14.5" fill="#499c54"/><polygon points="7,1 15.5,8.25 7,15.5" fill="#499c54"/></svg>
<svg class="a" style="left:38px;top:757px;" width="16" height="16" viewBox="0 0 16 16"><rect x="1" y="1" width="3.5" height="14" fill="#5c5e60"/><rect x="8" y="1" width="3.5" height="14" fill="#5c5e60"/></svg>
<div class="a" style="left:38px;top:792px;width:13px;height:13px;background:#c75450;"></div>
<div class="a" style="left:33px;top:819px;width:24px;height:1px;background:#4a4c4e;"></div>
<svg class="a" style="left:36px;top:831px;" width="20" height="18" viewBox="0 0 20 18"><circle cx="12.5" cy="6" r="5.5" fill="#c75450"/><circle cx="7" cy="11" r="6" fill="#3c3f41"/><circle cx="7" cy="11" r="5.5" fill="#c75450"/></svg>
<svg class="a" style="left:36px;top:864px;" width="20" height="18" viewBox="0 0 20 18"><circle cx="9.5" cy="9" r="6.5" fill="#c75450"/><path d="M2 16 L17 2" stroke="#3c3f41" stroke-width="3"/><path d="M2 16 L17 2" stroke="#afb1b3" stroke-width="1.4"/></svg>
<div class="a" style="left:33px;top:893px;width:24px;height:1px;background:#4a4c4e;"></div>
<svg class="a" style="left:35px;top:905px;" width="20" height="18" viewBox="0 0 20 18"><rect x="1" y="4" width="17" height="13" rx="1" fill="#afb1b3"/><rect x="6" y="1" width="7" height="4" fill="#afb1b3"/><circle cx="9.5" cy="10.5" r="3.7" fill="#3c3f41"/><circle cx="9.5" cy="10.5" r="2" fill="#afb1b3"/></svg>
<div class="a" style="left:33px;top:934px;width:24px;height:1px;background:#4a4c4e;"></div>
<div class="a t s " style="left:41px;top:946.15px;font-size:14px;line-height:18px;color:#afb1b3;">››</div>
<svg class="a" style="left:36px;top:651px;" width="0" height="0" viewBox="0 0 0 0"></svg>
<div class="a t s " style="left:80.4px;top:653.35px;font-size:14px;line-height:18px;color:#bbbbbb;letter-spacing:-0.156px;">Debugger</div>
<div class="a" style="left:64px;top:676px;width:93px;height:3px;background:#4a88c7;"></div>
<svg class="a" style="left:163px;top:659px;" width="13" height="13" viewBox="0 0 13 13"><circle cx="6" cy="7" r="5.5" fill="#f0a732"/><path d="M6 3 V9 M3.5 6.5 L6 9.5 L8.5 6.5" fill="none" stroke="#3c3f41" stroke-width="1.3"/></svg>
<div class="a t s " style="left:173px;top:653.35px;font-size:14px;line-height:18px;color:#bbbbbb;letter-spacing:-0.444px;">Console</div>
<svg class="a" style="left:245px;top:652px;" width="18" height="17" viewBox="0 0 18 17"><rect x="1.2" y="1.8" width="15.6" height="2.5" fill="#c4c4c4"/><rect x="1.2" y="6.6" width="15.6" height="4" fill="#3592c4"/><rect x="1.2" y="13" width="15.6" height="2.6" fill="#c4c4c4"/></svg>
<div class="a" style="left:274px;top:648px;width:1px;height:24px;background:#515151;"></div>
<svg class="a" style="left:286px;top:651px;" width="18" height="19" viewBox="0 0 18 19"><path d="M1.5 9 L8.5 2 L14 7.5" fill="none" stroke="#3592c4" stroke-width="2.2"/><polygon points="17,4 17,11.6 9.5,11.6" fill="#3592c4"/><rect x="1.5" y="14.3" width="15.2" height="2.4" fill="#c4c4c4"/></svg>
<svg class="a" style="left:319px;top:651px;" width="18" height="19" viewBox="0 0 18 19"><path d="M9 0 V8" stroke="#3592c4" stroke-width="2.2"/><polygon points="3.2,6 14.8,6 9,12.3" fill="#3592c4"/><rect x="1.5" y="14.3" width="15.2" height="2.4" fill="#c4c4c4"/></svg>
<svg class="a" style="left:352px;top:651px;" width="18" height="19" viewBox="0 0 18 19"><path d="M8.8 5 V13" stroke="#3592c4" stroke-width="2.2"/><polygon points="3,7 14.6,7 8.8,0.8" fill="#3592c4"/><rect x="0.5" y="14.3" width="15.2" height="2.4" fill="#c4c4c4"/></svg>
<svg class="a" style="left:385px;top:651px;" width="20" height="20" viewBox="0 0 20 20"><path d="M1 1.5 L7 7.5" stroke="#3592c4" stroke-width="2.2"/><polygon points="10,3 10,10.5 2.5,10.5" fill="#3592c4"/><path d="M10.5 8.5 H16 M13.2 8.5 V17.3 M10.5 17.3 H16" stroke="#c4c4c4" stroke-width="1.2"/></svg>
<div class="a" style="left:413px;top:648px;width:1px;height:24px;background:#515151;"></div>
<svg class="a" style="left:426px;top:652px;" width="16" height="16" viewBox="0 0 16 16"><rect x="1" y="1" width="14" height="14" fill="none" stroke="#c4c4c4" stroke-width="2"/><rect x="3" y="3" width="10" height="2.2" fill="#c4c4c4"/><path d="M2 8.5 H14 M2 11.5 H14 M5.5 7 V14 M10.5 7 V14" stroke="#c4c4c4" stroke-width="1.3"/></svg>
<svg class="a" style="left:457px;top:652px;" width="18" height="16" viewBox="0 0 18 16"><path d="M1 2 H6 M1 7 H6 M1 12 H6 M10 2 H17 M10 7 H17 M10 12 H17 M4 15 L13 0" stroke="#5f6163" stroke-width="1.5"/></svg>
<svg class="a" style="left:1869px;top:653px;" width="21" height="19" viewBox="0 0 21 19"><rect x="1" y="1" width="7" height="6" fill="#afb1b3"/><rect x="10" y="1" width="7" height="6" fill="#afb1b3"/><rect x="1" y="9" width="16" height="4" fill="#afb1b3"/><polygon points="14,15 20,15 17,18" fill="#afb1b3"/></svg>
<div class="a t s " style="left:80.4px;top:689.05px;font-size:14px;line-height:18px;color:#bbbbbb;letter-spacing:-0.830px;">Frames</div>
<div class="a t s " style="left:156.5px;top:689.05px;font-size:14px;line-height:18px;color:#bbbbbb;letter-spacing:-0.676px;">Threads</div>
<div class="a" style="left:63px;top:713px;width:339px;height:1px;background:#2b2b2b;"></div>
<div class="a" style="left:64px;top:712px;width:77px;height:2px;background:#787d82;"></div>
<div class="a" style="left:402px;top:679px;width:1px;height:287px;background:#2b2b2b;"></div>
<svg class="a" style="left:76px;top:723px;" width="18" height="14" viewBox="0 0 18 14"><path d="M1.5 7 L6.5 12 L16.5 1.5" fill="none" stroke="#e0652f" stroke-width="2.8"/></svg>
<div class="a t s " style="left:100.2px;top:721.95px;font-size:16px;line-height:21px;color:#bbbbbb;letter-spacing:-0.127px;">"main"@1 in g...ain": RUNNING</div>
<div class="a" style="left:339px;top:717px;width:27px;height:28px;background:#5b5e60;border-radius:4px;"></div>
<svg class="a" style="left:344px;top:723px;" width="17" height="16" viewBox="0 0 17 16"><polygon points="0.5,0.5 16.5,0.5 10.5,7.5 10.5,15.5 6.5,15.5 6.5,7.5" fill="#c8c8c8"/></svg>
<svg class="a" style="left:379px;top:727px;" width="12" height="8" viewBox="0 0 12 8"><polygon points="0.5,0.5 11.5,0.5 6,7" fill="#afb1b3"/></svg>
<div class="a" style="left:64px;top:750px;width:338px;height:26px;background:#0d293e;"></div>
<svg class="a" style="left:74px;top:755px;" width="17" height="15" viewBox="0 0 17 15"><path d="M5 4 H10 A5 4.5 0 0 1 10 13 H7" fill="none" stroke="#bbbbbb" stroke-width="1.5"/><path d="M6 0.5 L1.5 4 L6 7.5" fill="none" stroke="#bbbbbb" stroke-width="1.5"/></svg>
<div class="a" style="left:64px;top:745px;width:338px;height:60px;overflow:hidden;">
<div class="a t s " style="left:33.400000000000006px;top:8.25px;font-size:16px;line-height:21px;color:#bbbbbb;letter-spacing:0.294px;">&lt;init&gt;:20, person</div>
<div class="a t s " style="left:163.7px;top:8.25px;font-size:16px;line-height:21px;color:#bbbbbb;font-style:italic;letter-spacing:0.45px;">(com.atguigu.constructor)</div>
<div class="a t s " style="left:32.5px;top:34.25px;font-size:16px;line-height:21px;color:#bbbbbb;letter-spacing:0.108px;">main:6, ConstructorTest</div>
<div class="a t s " style="left:212px;top:34.25px;font-size:16px;line-height:21px;color:#858585;font-style:italic;letter-spacing:0.45px;">(com.atguigu.constructor)</div>
</div>
<div class="a" style="left:64px;top:927px;width:277px;height:10px;background:#5a5c5e;"></div>
<div class="a t s " style="left:74px;top:945.05px;font-size:14px;line-height:18px;color:#8d8d8d;letter-spacing:-0.047px;">Switch frames from anywhere in the IDE with Ct..</div>
<svg class="a" style="left:383px;top:947px;" width="10" height="10" viewBox="0 0 10 10"><path d="M0.5 0.5 L9.5 9.5 M9.5 0.5 L0.5 9.5" stroke="#7d7f81" stroke-width="1.2"/></svg>
<div class="a" style="left:403px;top:679px;width:1218px;height:34px;background:#45494a;"></div>
<div class="a t m " style="left:413px;top:687.01px;font-size:15px;line-height:20px;color:#7c7e80;">Evaluate expression (Enter) or add a watch (Ctrl+Shift+Enter)</div>
<svg class="a" style="left:1564px;top:688px;" width="18" height="19" viewBox="0 0 18 19"><path d="M8 1 V11 M3 6 H13" stroke="#5f6163" stroke-width="2"/><circle cx="9" cy="15" r="2.6" fill="none" stroke="#5f6163" stroke-width="1.3"/><circle cx="15" cy="15" r="2.6" fill="none" stroke="#5f6163" stroke-width="1.3"/></svg>
<svg class="a" style="left:1597px;top:693px;" width="12" height="8" viewBox="0 0 12 8"><polygon points="0.5,0.5 11.5,0.5 6,7" fill="#afb1b3"/></svg>
<div class="a" style="left:403px;top:713px;width:1218px;height:1px;background:#2b2b2b;"></div>
<svg class="a" style="left:412px;top:721.5px;" width="12" height="8" viewBox="0 0 12 8"><path d="M1 1.5 L6 6.5 L11 1.5" fill="none" stroke="#a9abad" stroke-width="1.4"/></svg>
<svg class="a" style="left:437px;top:721px;" width="14" height="14" viewBox="0 0 14 14"><rect x="0" y="0" width="13" height="3" fill="#c1903a"/><rect x="0" y="5" width="13" height="3" fill="#c1903a"/><rect x="0" y="10" width="13" height="3" fill="#c1903a"/></svg>
<div class="a t s " style="left:458.5px;top:717.35px;font-size:16px;line-height:21px;color:#bbbbbb;letter-spacing:0.107px;"><span style="color:#ec8a80">this</span> = <span style="color:#8c8c8c">{person@501}</span></div>
<svg class="a" style="left:435.5px;top:745.5px;" width="8" height="12" viewBox="0 0 8 12"><path d="M1.5 1 L6.5 6 L1.5 11" fill="none" stroke="#a9abad" stroke-width="1.4"/></svg>
<svg class="a" style="left:457px;top:744px;" width="18" height="18" viewBox="0 0 18 18"><circle cx="9" cy="9" r="9" fill="#b48a3f"/><text x="9" y="13.5" text-anchor="middle" font-family="Liberation Sans" font-size="13" fill="#3a3024">f</text></svg>
<div class="a t s " style="left:480.3px;top:742.65px;font-size:16px;line-height:21px;color:#bbbbbb;letter-spacing:0.111px;"><span style="color:#ec8a80">name</span> = <span style="color:#6a8759">"jack"</span></div>
<svg class="a" style="left:457px;top:769px;" width="18" height="18" viewBox="0 0 18 18"><circle cx="9" cy="9" r="9" fill="#b48a3f"/><text x="9" y="13.5" text-anchor="middle" font-family="Liberation Sans" font-size="13" fill="#3a3024">f</text></svg>
<div class="a t s " style="left:480.3px;top:767.65px;font-size:16px;line-height:21px;color:#bbbbbb;letter-spacing:0.082px;"><span style="color:#589df6">age</span> = 18</div>
<svg class="a" style="left:413.5px;top:795.5px;" width="8" height="12" viewBox="0 0 8 12"><path d="M1.5 1 L6.5 6 L1.5 11" fill="none" stroke="#a9abad" stroke-width="1.4"/></svg>
<svg class="a" style="left:435px;top:794px;" width="18" height="18" viewBox="0 0 18 18"><circle cx="9" cy="9" r="9" fill="#b48a3f"/><text x="9" y="13.5" text-anchor="middle" font-family="Liberation Sans" font-size="13" fill="#3a3024">p</text></svg>
<div class="a t s " style="left:458.5px;top:792.65px;font-size:16px;line-height:21px;color:#bbbbbb;letter-spacing:0.198px;"><span style="color:#ec8a80">pName</span> = <span style="color:#6a8759">"jack"</span></div>
<svg class="a" style="left:435px;top:819px;" width="18" height="18" viewBox="0 0 18 18"><circle cx="9" cy="9" r="9" fill="#b48a3f"/><text x="9" y="13.5" text-anchor="middle" font-family="Liberation Sans" font-size="13" fill="#3a3024">p</text></svg>
<div class="a t s " style="left:458.5px;top:817.65px;font-size:16px;line-height:21px;color:#bbbbbb;letter-spacing:0.325px;"><span style="color:#ec8a80">pAge</span> = 18</div>
<svg class="a" style="left:434px;top:848px;" width="21" height="10" viewBox="0 0 21 10"><circle cx="5" cy="5" r="3.8" fill="none" stroke="#a9b3bb" stroke-width="2"/><circle cx="15.5" cy="5" r="3.8" fill="none" stroke="#a9b3bb" stroke-width="2"/><path d="M1 4 Q1 1 4 1 M17 1 Q20 1 20 4" fill="none" stroke="#a9b3bb" stroke-width="1.5"/></svg>
<div class="a t s " style="left:458px;top:842.65px;font-size:16px;line-height:21px;color:#bbbbbb;letter-spacing:0.139px;"><span style="color:#589df6">age</span> = 18</div>
<div class="a" style="left:399px;top:714px;width:273px;height:173px;border:4px solid #f41b1b;box-sizing:border-box;"></div>
<div class="a" style="left:1621px;top:679px;width:1px;height:287px;background:#2b2b2b;"></div>
<div class="a t s " style="left:1639px;top:689.65px;font-size:14px;line-height:18px;color:#bbbbbb;letter-spacing:0.288px;">Memory</div>
<div class="a t s " style="left:1723px;top:689.65px;font-size:14px;line-height:18px;color:#bbbbbb;letter-spacing:-0.283px;">Overhead</div>
<div class="a" style="left:1622px;top:712px;width:85px;height:2px;background:#787d82;"></div>
<div class="a" style="left:1622px;top:713px;width:270px;height:1px;background:#2b2b2b;"></div>
<div class="a" style="left:1626px;top:718px;width:231px;height:29px;background:#45494a;border:1px solid #5e6163;border-radius:3px;box-sizing:border-box;"></div>
<svg class="a" style="left:1636px;top:725px;" width="16" height="16" viewBox="0 0 16 16"><circle cx="6.5" cy="6.5" r="5.2" fill="none" stroke="#8c8c8c" stroke-width="1.4"/><path d="M10.5 10.5 L15 15" stroke="#8c8c8c" stroke-width="1.5"/></svg>
<svg class="a" style="left:1867px;top:724px;" width="17" height="17" viewBox="0 0 17 17"><rect x="6.80" y="0.3" width="3.40" height="5.10" fill="#afb1b3" transform="rotate(0 8.5 8.5)"/><rect x="6.80" y="0.3" width="3.40" height="5.10" fill="#afb1b3" transform="rotate(45 8.5 8.5)"/><rect x="6.80" y="0.3" width="3.40" height="5.10" fill="#afb1b3" transform="rotate(90 8.5 8.5)"/><rect x="6.80" y="0.3" width="3.40" height="5.10" fill="#afb1b3" transform="rotate(135 8.5 8.5)"/><rect x="6.80" y="0.3" width="3.40" height="5.10" fill="#afb1b3" transform="rotate(180 8.5 8.5)"/><rect x="6.80" y="0.3" width="3.40" height="5.10" fill="#afb1b3" transform="rotate(225 8.5 8.5)"/><rect x="6.80" y="0.3" width="3.40" height="5.10" fill="#afb1b3" transform="rotate(270 8.5 8.5)"/><rect x="6.80" y="0.3" width="3.40" height="5.10" fill="#afb1b3" transform="rotate(315 8.5 8.5)"/><circle cx="8.5" cy="8.5" r="5.61" fill="#afb1b3"/><circle cx="8.5" cy="8.5" r="2.55" fill="#3c3f41"/></svg>
<svg class="a" style="left:1879px;top:737px;" width="10" height="6" viewBox="0 0 10 6"><polygon points="0.5,0.5 9.5,0.5 5,5.5" fill="#afb1b3"/></svg>
<div class="a" style="left:1622px;top:751px;width:269px;height:30px;background:#45494a;"></div>
<div class="a" style="left:1622px;top:781px;width:269px;height:1px;background:#323232;"></div>
<div class="a" style="left:1692px;top:752px;width:1px;height:28px;background:#5a5d5f;"></div>
<div class="a" style="left:1793px;top:752px;width:1px;height:28px;background:#5a5d5f;"></div>
<div class="a t s " style="left:1633px;top:757.45px;font-size:16px;line-height:21px;color:#bbbbbb;letter-spacing:-1.102px;">Class</div>
<div class="a t s " style="left:1703px;top:757.45px;font-size:16px;line-height:21px;color:#bbbbbb;letter-spacing:0.251px;">Count</div>
<div class="a t s " style="left:1803.8px;top:757.45px;font-size:16px;line-height:21px;color:#bbbbbb;letter-spacing:0.267px;">Diff</div>
<svg class="a" style="left:1837px;top:763px;" width="12" height="7" viewBox="0 0 12 7"><polygon points="0.5,0.5 11.5,0.5 6,6.5" fill="#afb1b3"/></svg>
<div class="a t s " style="left:1640.5px;top:837.55px;font-size:16px;line-height:21px;color:#8c8c8c;letter-spacing:-0.167px;">No classes loaded. <span style="color:#589df6">Load classes</span></div>
<div class="a" style="left:1892px;top:72px;width:1px;height:894px;background:#2b2b2b;"></div>
<div class="a t s " style="left:1897px;top:78.07px;font-size:20px;line-height:26px;color:#afb1b3;font-style:italic;font-weight:bold;">m</div>
<div class="a t s" style="left:1912.5px;top:106px;font-size:14px;line-height:17px;color:#bbbbbb;transform-origin:0 0;transform:rotate(90deg);">Maven</div>
<svg class="a" style="left:1898px;top:174px;" width="17" height="16" viewBox="0 0 17 16"><circle cx="8.5" cy="3" r="2.8" fill="#afb1b3"/><circle cx="3" cy="13" r="2.8" fill="#afb1b3"/><circle cx="14" cy="13" r="2.8" fill="#afb1b3"/><path d="M8.5 3 L3 13 M8.5 3 L14 13" stroke="#afb1b3" stroke-width="1.3"/></svg>
<div class="a t s" style="left:1912.5px;top:194px;font-size:14px;line-height:17px;color:#bbbbbb;transform-origin:0 0;transform:rotate(90deg);">Endpoints</div>
<svg class="a" style="left:1898px;top:283px;" width="17" height="16" viewBox="0 0 17 16"><path d="M12 13 A6.5 6.5 0 1 1 15 8 Q15 12 12 11 Q10 10 11 7 A3 3 0 1 0 9 10" fill="none" stroke="#afb1b3" stroke-width="1.5"/></svg>
<div class="a t s" style="left:1912.5px;top:305px;font-size:14px;line-height:17px;color:#bbbbbb;transform-origin:0 0;transform:rotate(90deg);">AI Assistant</div>
<svg class="a" style="left:1898px;top:403px;" width="17" height="17" viewBox="0 0 17 17"><ellipse cx="8.5" cy="3" rx="7" ry="2.6" fill="#afb1b3"/><path d="M1.5 5 V14 Q8.5 18 15.5 14 V5 Q8.5 9 1.5 5 Z" fill="#afb1b3"/><path d="M1.5 8.5 Q8.5 12.5 15.5 8.5 M1.5 12 Q8.5 16 15.5 12" fill="none" stroke="#3c3f41" stroke-width="1"/></svg>
<div class="a t s" style="left:1912.5px;top:425.8px;font-size:14px;line-height:17px;color:#bbbbbb;transform-origin:0 0;transform:rotate(90deg);">Database</div>
<svg class="a" style="left:1898px;top:509px;" width="18" height="18" viewBox="0 0 18 18"><path d="M3 13 V8 A5.5 5.5 0 0 1 14 8 V13 L15.5 14.5 H1.5 Z" fill="#afb1b3"/><circle cx="8.5" cy="16" r="1.8" fill="#afb1b3"/><circle cx="14" cy="3.5" r="3.5" fill="#3c3f41"/><circle cx="14" cy="3.5" r="2.8" fill="#e05555"/></svg>
<div class="a t s" style="left:1912.5px;top:531.5px;font-size:14px;line-height:17px;color:#bbbbbb;transform-origin:0 0;transform:rotate(90deg);">Notifications</div>
<svg class="a" style="left:1898px;top:875px;" width="15" height="18" viewBox="0 0 15 18"><path d="M1 2 L7.5 0 L14 2 V9 Q14 15 7.5 17 Q1 15 1 9 Z" fill="#afb1b3"/><path d="M7.5 1.5 V15.5" stroke="#3c3f41" stroke-width="1.3"/></svg>
<div class="a t s" style="left:1912.5px;top:896px;font-size:14px;line-height:17px;color:#bbbbbb;transform-origin:0 0;transform:rotate(90deg);">Coverage</div>
<div class="a" style="left:1786px;top:962px;width:1px;height:0px;background:#000;"></div>
<div class="a t s" style="left:8px;top:825px;font-size:13.5px;line-height:16.5px;color:#bbbbbb;transform-origin:0 0;transform:rotate(-90deg);">Bookmarks</div>
<svg class="a" style="left:8px;top:830px;" width="13" height="15" viewBox="0 0 13 15"><path d="M0 0 H12 V14 L6 9.5 L0 14 Z" fill="#afb1b3"/></svg>
<div class="a t s" style="left:8px;top:931px;font-size:14px;line-height:17px;color:#bbbbbb;transform-origin:0 0;transform:rotate(-90deg);">Structure</div>
<svg class="a" style="left:7px;top:937px;" width="14" height="14" viewBox="0 0 14 14"><rect x="7" y="0" width="6" height="6" fill="#afb1b3"/><rect x="0" y="7" width="6" height="6" fill="#afb1b3"/><rect x="7" y="7" width="6" height="6" fill="#afb1b3"/></svg>
<div class="a" style="left:0px;top:966px;width:1920px;height:1px;background:#2b2b2b;"></div>
<div class="a" style="left:241px;top:967px;width:88px;height:27px;background:#2f3133;"></div>
<div class="a" style="left:0px;top:994px;width:1920px;height:1px;background:#323232;"></div>
<svg class="a" style="left:42px;top:975px;" width="14" height="16" viewBox="0 0 14 16"><circle cx="3" cy="3" r="2.3" fill="none" stroke="#afb1b3" stroke-width="1.4"/><path d="M3 5 V15 M3 12 Q3 8 8 7 Q11 6 11 3" fill="none" stroke="#afb1b3" stroke-width="1.8"/><circle cx="11" cy="3" r="2.3" fill="#afb1b3"/></svg>
<div class="a t s " style="left:63px;top:974.15px;font-size:14px;line-height:18px;color:#bbbbbb;letter-spacing:-0.035px;">Version Control</div>
<svg class="a" style="left:187px;top:975px;" width="11" height="14" viewBox="0 0 11 14"><polygon points="0.5,0.5 10.5,7 0.5,13.5" fill="#afb1b3"/></svg>
<div class="a t s " style="left:206px;top:974.15px;font-size:14px;line-height:18px;color:#bbbbbb;letter-spacing:-0.841px;">Run</div>
<svg class="a" style="left:253px;top:973px;" width="18" height="20" viewBox="0 0 18 20"><ellipse cx="8" cy="10" rx="5.5" ry="6.5" fill="#afb1b3"/><path d="M4 2 L6.5 5 M12 2 L9.5 5 M0.5 8 H3 M13 8 H15.5 M0.5 12.5 H3 M13 12.5 H15.5" stroke="#afb1b3" stroke-width="1.5"/><circle cx="13.5" cy="16.5" r="3" fill="#2f3133"/><circle cx="13.5" cy="16.5" r="2.2" fill="#22d12a"/></svg>
<div class="a t s " style="left:275px;top:974.15px;font-size:14px;line-height:18px;color:#e0e0e0;letter-spacing:-0.064px;">Debug</div>
<svg class="a" style="left:343px;top:975px;" width="14" height="13" viewBox="0 0 14 13"><path d="M0 1.5 H2.5 M0 6 H2.5 M0 10.5 H2.5 M4.5 1.5 H13.5 M4.5 6 H13.5 M4.5 10.5 H13.5" stroke="#afb1b3" stroke-width="1.8"/></svg>
<div class="a t s " style="left:363px;top:974.15px;font-size:14px;line-height:18px;color:#bbbbbb;letter-spacing:-0.647px;">TODO</div>
<svg class="a" style="left:427px;top:974px;" width="15" height="15" viewBox="0 0 15 15"><circle cx="7.5" cy="7.5" r="7" fill="#afb1b3"/><rect x="6.3" y="3" width="2.4" height="6" fill="#3c3f41"/><rect x="6.3" y="10.2" width="2.4" height="2.2" fill="#3c3f41"/></svg>
<div class="a t s " style="left:448px;top:974.15px;font-size:14px;line-height:18px;color:#bbbbbb;letter-spacing:-0.304px;">Problems</div>
<svg class="a" style="left:531px;top:974px;" width="16" height="14" viewBox="0 0 16 14"><rect x="0.5" y="0.5" width="15" height="13" fill="#afb1b3"/><path d="M3 3.5 L6 6 L3 8.5 M7 10 H12" fill="none" stroke="#3c3f41" stroke-width="1.3"/></svg>
<div class="a t s " style="left:553px;top:974.15px;font-size:14px;line-height:18px;color:#bbbbbb;letter-spacing:-0.351px;">Terminal</div>
<svg class="a" style="left:630px;top:974px;" width="16" height="16" viewBox="0 0 16 16"><path d="M4 0.5 H12 L15.5 8 L12 15.5 H4 L0.5 8 Z" fill="#afb1b3"/><polygon points="6,4.5 11.5,8 6,11.5" fill="#3c3f41"/></svg>
<div class="a t s " style="left:651px;top:974.15px;font-size:14px;line-height:18px;color:#bbbbbb;letter-spacing:-0.526px;">Services</div>
<svg class="a" style="left:724px;top:974px;" width="18" height="17" viewBox="0 0 18 17"><path d="M11 3 A6.5 6.5 0 1 0 7.5 14.5" fill="none" stroke="#afb1b3" stroke-width="1.6"/><path d="M7 4 V8 L5 10" fill="none" stroke="#afb1b3" stroke-width="1.3"/><polygon points="9,7 17,11.5 9,16" fill="none" stroke="#afb1b3" stroke-width="1.4"/></svg>
<div class="a t s " style="left:746px;top:974.15px;font-size:14px;line-height:18px;color:#bbbbbb;letter-spacing:-0.049px;">Profiler</div>
<svg class="a" style="left:815px;top:974px;" width="16" height="16" viewBox="0 0 16 16"><path d="M1 5 L6 1 L8.5 3.5 L4.5 7 Z" fill="#afb1b3"/><path d="M5 4 L15 14.5 L13.5 16 L3.5 5.5 Z" fill="#afb1b3"/></svg>
<div class="a t s " style="left:836px;top:974.15px;font-size:14px;line-height:18px;color:#bbbbbb;letter-spacing:-0.283px;">Build</div>
<svg class="a" style="left:15px;top:1000px;" width="17" height="16" viewBox="0 0 17 16"><rect x="4.5" y="0.5" width="12" height="11" fill="none" stroke="#afb1b3" stroke-width="1.2"/><path d="M1 4 V15 H13" fill="none" stroke="#afb1b3" stroke-width="1.2"/></svg>
<div class="a t s " style="left:1628px;top:998.95px;font-size:14px;line-height:18px;color:#bbbbbb;letter-spacing:0.917px;">20:1</div>
<div class="a t s " style="left:1674px;top:998.95px;font-size:14px;line-height:18px;color:#bbbbbb;letter-spacing:-0.186px;">CRLF</div>
<div class="a t s " style="left:1725px;top:998.95px;font-size:14px;line-height:18px;color:#bbbbbb;letter-spacing:0.709px;">UTF-8</div>
<div class="a t s " style="left:1783px;top:998.95px;font-size:14px;line-height:18px;color:#bbbbbb;letter-spacing:0.852px;">4 spaces</div>
<svg class="a" style="left:1858px;top:999px;" width="18" height="17" viewBox="0 0 18 17"><rect x="3" y="8" width="12" height="7.5" fill="#afb1b3"/><path d="M2 7 V5 A3.2 3.2 0 0 1 8.4 5 V8.5" fill="none" stroke="#afb1b3" stroke-width="1.6"/></svg>
<svg class="a" style="left:1890px;top:1000px;" width="17" height="17" viewBox="0 0 17 17"><circle cx="8.5" cy="8.5" r="8" fill="#afb1b3"/><rect x="7.2" y="3.5" width="2.6" height="7" fill="#3c3f41"/><rect x="7.2" y="11.8" width="2.6" height="2.4" fill="#3c3f41"/></svg></body></html>
